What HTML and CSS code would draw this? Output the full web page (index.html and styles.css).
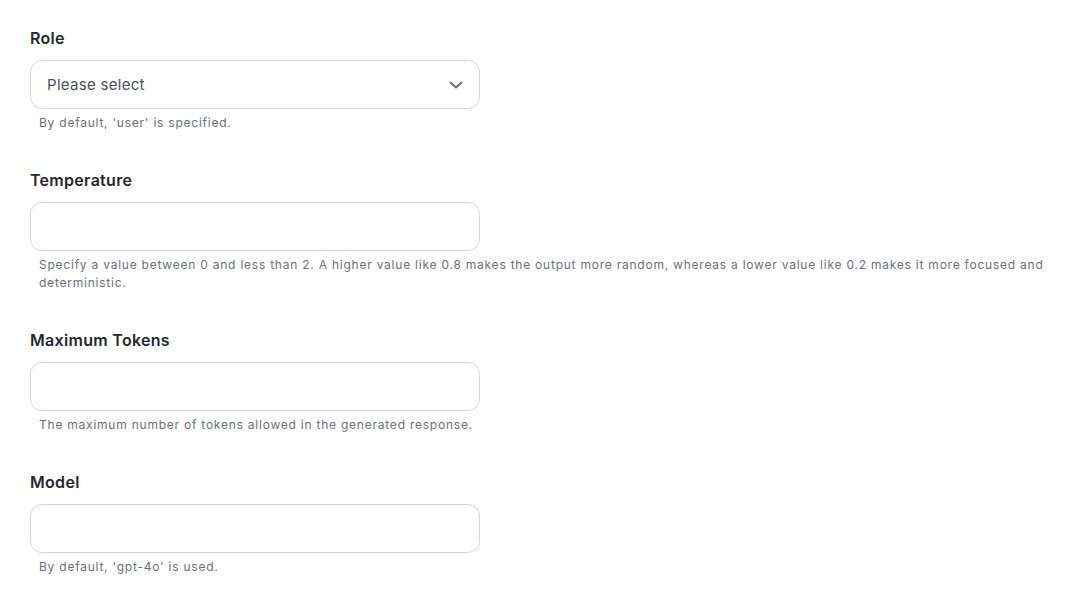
FILE: index.html
```html
<!DOCTYPE html>
<html lang="en">
<head>
<meta charset="utf-8">
<title>Settings</title>
<link rel="stylesheet" href="styles.css">
</head>
<body>
<form class="form">
  <div class="field">
    <label class="label" for="role">Role</label>
    <div class="select" id="role">
      <span class="select-text">Please select</span>
      <svg class="chevron" width="14" height="8" viewBox="0 0 14 8" fill="none"><path d="M1.5 1.5 7 6.5l5.5-5" stroke="#6b7280" stroke-width="2" stroke-linecap="round" stroke-linejoin="round"/></svg>
    </div>
    <p class="help">By default, 'user' is specified.</p>
  </div>
  <div class="field">
    <label class="label" for="temp">Temperature</label>
    <input class="input" id="temp" type="text">
    <p class="help">Specify a value between 0 and less than 2. A higher value like 0.8 makes the output more random, whereas a lower value like 0.2 makes it more focused and deterministic.</p>
  </div>
  <div class="field">
    <label class="label" for="tokens">Maximum Tokens</label>
    <input class="input" id="tokens" type="text">
    <p class="help">The maximum number of tokens allowed in the generated response.</p>
  </div>
  <div class="field">
    <label class="label" for="model">Model</label>
    <input class="input" id="model" type="text">
    <p class="help">By default, 'gpt-4o' is used.</p>
  </div>
</form>
</body>
</html>
```
FILE: styles.css
```css
* { box-sizing: border-box; }
html, body { margin: 0; padding: 0; background: #ffffff; }
body { font-family: Inter, "Noto Sans", sans-serif; color: #26282c; }
.form { display: flex; flex-direction: column; gap: 38px; padding: 27px 24px 0 30px; }
.field { display: flex; flex-direction: column; }
.label { font-size: 16px; line-height: 22px; font-weight: 600; color: #26282c; margin-bottom: 11px; letter-spacing: 0.3px; }
.select, .input {
  width: 450px; height: 49px; border: 1px solid #d4d6dc; border-radius: 12px; background: #fff;
  font-family: inherit; font-size: 15px;
}
.select { display: flex; align-items: center; justify-content: space-between; padding: 0 16px 0 16px; }
.select-text { color: #4b5058; font-size: 15px; letter-spacing: 0.3px; }
.chevron { display: block; }
.input { padding: 0 16px; outline: none; }
.help { margin: 5px 0 0 9px; font-size: 12px; line-height: 18px; color: #6b7078; letter-spacing: 0.77px; }
.field + .field { margin-top: -1px; }
```
